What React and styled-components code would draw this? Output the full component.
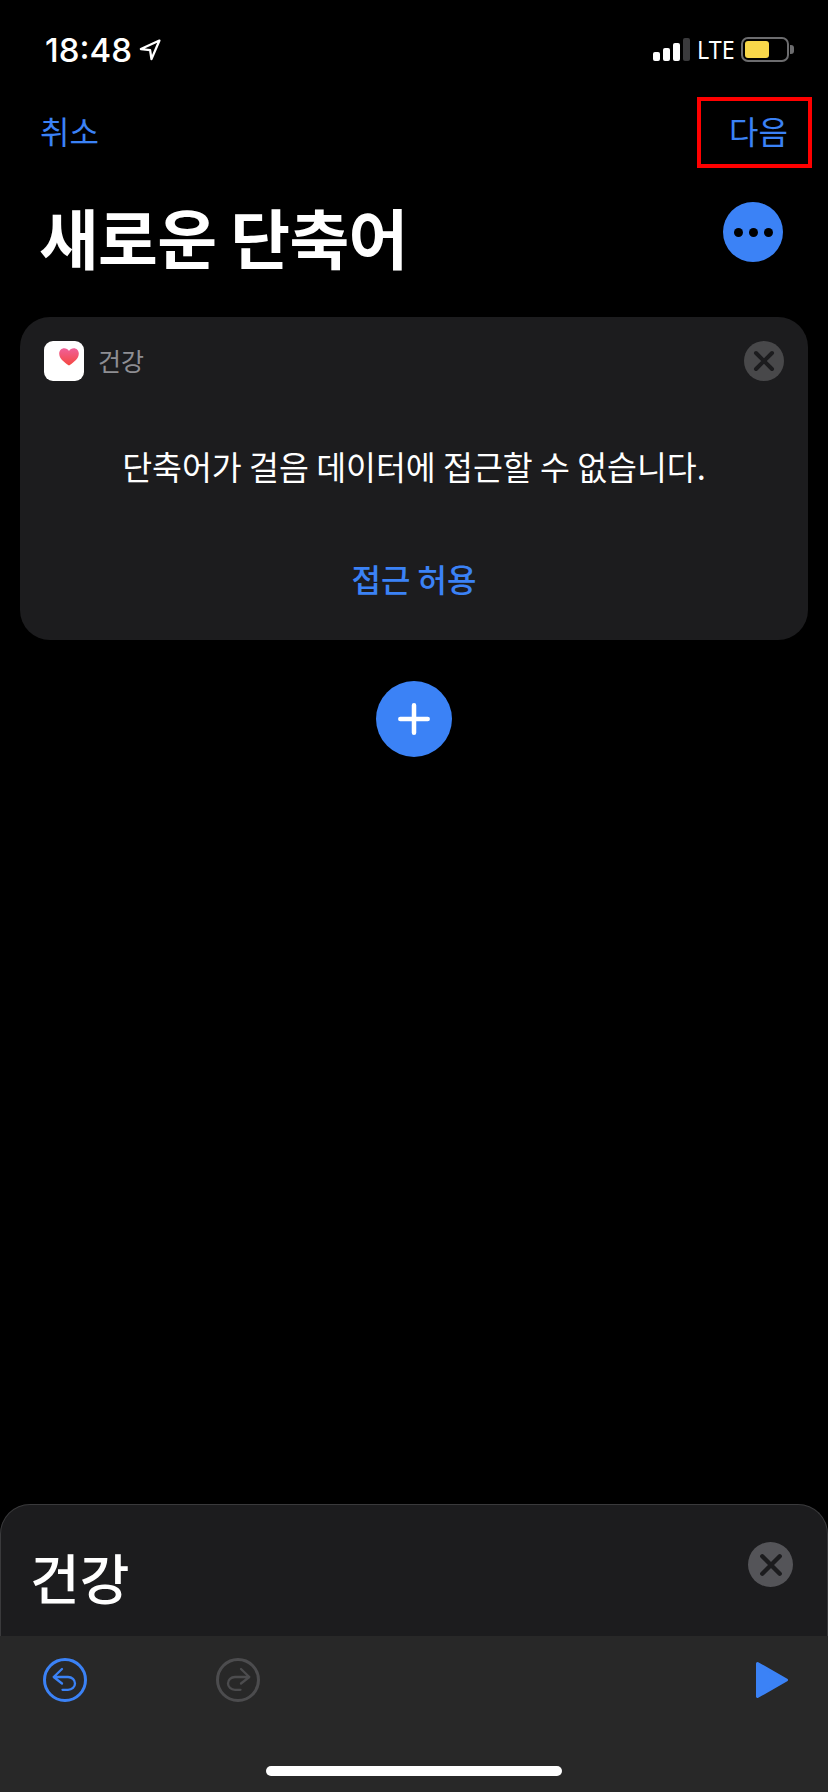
import React from 'react';
import styled, { createGlobalStyle } from 'styled-components';

const BLUE = '#3b82f6';
const FONT = '"Noto Sans CJK KR", "Noto Sans", sans-serif';

const App = () => {
  return (
    <>
      <GlobalStyle />
      <Screen>
        <StatusBar>
          <TimeGroup>
            <Time>18:48</Time>
            <LocationArrow />
          </TimeGroup>
          <StatusRight>
            <SignalBars>
              <Bar $h={9} />
              <Bar $h={13} />
              <Bar $h={18} />
              <Bar $h={23} $off />
            </SignalBars>
            <Lte>LTE</Lte>
            <Battery>
              <BatteryFill />
            </Battery>
            <BatteryCap />
          </StatusRight>
        </StatusBar>

        <NavRow>
          <NavLink>취소</NavLink>
          <NavLink>다음</NavLink>
          <Highlight />
        </NavRow>

        <TitleRow>
          <Title>새로운 단축어</Title>
          <MoreButton>
            <Dot />
            <Dot />
            <Dot />
          </MoreButton>
        </TitleRow>

        <Card>
          <CardHeader>
            <AppIcon>
              <HeartIcon />
            </AppIcon>
            <AppName>건강</AppName>
            <CloseButton $size={40} $bg="#48484a">
              <CrossIcon size={22} />
            </CloseButton>
          </CardHeader>
          <Message>단축어가 걸음 데이터에 접근할 수 없습니다.</Message>
          <AllowLink>접근 허용</AllowLink>
        </Card>

        <AddButton>
          <PlusIcon />
        </AddButton>

        <Sheet>
          <SheetTitle>건강</SheetTitle>
          <CloseButton $size={45} $bg="#545458">
            <CrossIcon size={24} />
          </CloseButton>
        </Sheet>

        <Toolbar>
          <ToolbarIcons>
            <UndoIcon color={BLUE} />
            <RedoIcon color="#4c4c4e" />
            <PlayIcon />
          </ToolbarIcons>
          <HomeBar />
        </Toolbar>
      </Screen>
    </>
  );
};

const LocationArrow = () => (
  <svg width="22" height="22" viewBox="0 0 21 21" fill="none">
    <path
      d="M19.5 1.5 L1.8 9.6 L10.6 10.6 L11.9 19.2 Z"
      stroke="#fff"
      strokeWidth="2.2"
      strokeLinejoin="round"
    />
  </svg>
);

const HeartIcon = () => (
  <HeartSvg width="20" height="18" viewBox="0 0 20 18">
    <defs>
      <linearGradient id="heart" x1="0" y1="0" x2="0" y2="1">
        <stop offset="0" stopColor="#f0609a" />
        <stop offset="1" stopColor="#f5473f" />
      </linearGradient>
    </defs>
    <path
      d="M10 17.6 C4.5 13.6 0.2 10.4 0.2 5.5 C0.2 2.4 2.5 0.2 5.2 0.2 C7.2 0.2 9 1.2 10 3 C11 1.2 12.8 0.2 14.8 0.2 C17.5 0.2 19.8 2.4 19.8 5.5 C19.8 10.4 15.5 13.6 10 17.6 Z"
      fill="url(#heart)"
    />
  </HeartSvg>
);

const CrossIcon = ({ size }) => (
  <svg width={size} height={size} viewBox="0 0 22 22" fill="none">
    <path
      d="M3 3 L19 19 M19 3 L3 19"
      stroke="#1c1c1e"
      strokeWidth="4"
      strokeLinecap="round"
    />
  </svg>
);

const PlusIcon = () => (
  <svg width="34" height="34" viewBox="0 0 34 34" fill="none">
    <path
      d="M17 3.3 V30.7 M3.3 17 H30.7"
      stroke="#fff"
      strokeWidth="4.5"
      strokeLinecap="round"
    />
  </svg>
);

const UndoIcon = ({ color }) => (
  <svg width="44" height="44" viewBox="0 0 44 44" fill="none">
    <circle cx="22" cy="22" r="20.5" stroke={color} strokeWidth="3" />
    <path
      d="M19 11 L10.7 19 L19 25.5 M10.7 19 H25 C29 19 32 22 32 25.5 C32 29 29 31.8 25 31.8 H19.5"
      stroke={color}
      strokeWidth="2.3"
      strokeLinecap="round"
      strokeLinejoin="round"
    />
  </svg>
);

const RedoIcon = ({ color }) => (
  <svg width="44" height="44" viewBox="0 0 44 44" fill="none">
    <circle cx="22" cy="22" r="20.5" stroke={color} strokeWidth="3" />
    <path
      d="M25 11 L33.3 19 L25 25.5 M33.3 19 H19 C15 19 12 22 12 25.5 C12 29 15 31.8 19 31.8 H24.5"
      stroke={color}
      strokeWidth="2.3"
      strokeLinecap="round"
      strokeLinejoin="round"
    />
  </svg>
);

const PlayIcon = () => (
  <PlaySvg width="34" height="38" viewBox="0 0 34 38">
    <path
      d="M2.5 2.5 L31.5 19 L2.5 35.5 Z"
      fill={BLUE}
      stroke={BLUE}
      strokeWidth="3"
      strokeLinejoin="round"
    />
  </PlaySvg>
);

const GlobalStyle = createGlobalStyle`
  html, body {
    margin: 0;
    padding: 0;
    background: #000;
  }
`;

const Screen = styled.div`
  position: relative;
  width: 828px;
  height: 1792px;
  display: flex;
  flex-direction: column;
  overflow: hidden;
  background: #000;
  color: #fff;
  font-family: ${FONT};
`;

const StatusBar = styled.div`
  height: 97px;
  box-sizing: border-box;
  padding: 31px 34px 0 45px;
  display: flex;
  justify-content: space-between;
  align-items: flex-start;
`;

const TimeGroup = styled.div`
  display: flex;
  align-items: center;
  gap: 7px;
`;

const Time = styled.span`
  font-family: Inter, sans-serif;
  font-size: 33px;
  line-height: 38px;
  font-weight: 500;
`;

const StatusRight = styled.div`
  display: flex;
  align-items: center;
  height: 28px;
  margin-top: 4px;
`;

const SignalBars = styled.div`
  display: flex;
  align-items: flex-end;
  gap: 3px;
  height: 24px;
`;

const Bar = styled.span`
  width: 7px;
  height: ${(p) => p.$h}px;
  border-radius: 2px;
  background: ${(p) => (p.$off ? '#3a3a3c' : '#fff')};
`;

const Lte = styled.span`
  margin-left: 7px;
  width: 36px;
  font-family: "Noto Sans", sans-serif;
  font-size: 25px;
  line-height: 28px;
  transform: scaleX(0.93);
  transform-origin: left center;
`;

const Battery = styled.div`
  margin-left: 8px;
  width: 48px;
  height: 25px;
  box-sizing: border-box;
  border: 2px solid #6c6c6e;
  border-radius: 7px;
  padding: 2px;
`;

const BatteryFill = styled.div`
  width: 24px;
  height: 100%;
  border-radius: 3px;
  background: #f8d74a;
`;

const BatteryCap = styled.span`
  margin-left: 1px;
  width: 4px;
  height: 9px;
  border-radius: 0 3px 3px 0;
  background: #6c6c6e;
`;

const NavRow = styled.div`
  position: relative;
  height: 71px;
  box-sizing: border-box;
  padding: 0 40px 6px;
  display: flex;
  justify-content: space-between;
  align-items: center;
`;

const NavLink = styled.span`
  font-size: 32px;
  line-height: 40px;
  color: ${BLUE};
`;

const Highlight = styled.div`
  position: absolute;
  top: 0;
  right: 16px;
  width: 115px;
  height: 71px;
  box-sizing: border-box;
  border: 4px solid #f00;
`;

const TitleRow = styled.div`
  height: 149px;
  box-sizing: border-box;
  padding: 34px 45px 0 39px;
  display: flex;
  justify-content: space-between;
  align-items: flex-start;
`;

const Title = styled.h1`
  margin: -5px 0 0;
  font-size: 65px;
  line-height: 78px;
  font-weight: 700;
  letter-spacing: -0.7px;
  white-space: nowrap;
`;

const MoreButton = styled.div`
  width: 60px;
  height: 60px;
  border-radius: 50%;
  background: ${BLUE};
  display: flex;
  align-items: center;
  justify-content: center;
  gap: 6px;
`;

const Dot = styled.span`
  width: 9px;
  height: 9px;
  border-radius: 50%;
  background: #000;
`;

const Card = styled.section`
  margin: 0 20px;
  height: 323px;
  box-sizing: border-box;
  padding: 24px 24px 0;
  border-radius: 30px;
  background: #1c1c1e;
  display: flex;
  flex-direction: column;
`;

const CardHeader = styled.div`
  display: flex;
  align-items: center;
  height: 40px;
`;

const AppIcon = styled.div`
  position: relative;
  width: 40px;
  height: 40px;
  border-radius: 9px;
  background: #fff;
`;

const HeartSvg = styled.svg`
  position: absolute;
  top: 7px;
  right: 5px;
`;

const AppName = styled.span`
  margin: 0 0 2px 14px;
  flex: 1;
  font-size: 25px;
  line-height: 34px;
  color: #8e8e93;
`;

const CloseButton = styled.div`
  width: ${(p) => p.$size}px;
  height: ${(p) => p.$size}px;
  flex-shrink: 0;
  border-radius: 50%;
  background: ${(p) => p.$bg};
  display: flex;
  align-items: center;
  justify-content: center;
`;

const Message = styled.p`
  margin: 60px 0 0;
  text-align: center;
  font-size: 32.5px;
  line-height: 50px;
  color: #fff;
  white-space: nowrap;
`;

const AllowLink = styled.div`
  margin-top: 65px;
  text-align: center;
  font-size: 32px;
  line-height: 44px;
  font-weight: 500;
  color: ${BLUE};
`;

const AddButton = styled.div`
  margin: 41px auto 0;
  width: 76px;
  height: 76px;
  border-radius: 50%;
  background: ${BLUE};
  display: flex;
  align-items: center;
  justify-content: center;
`;

const Sheet = styled.section`
  margin-top: auto;
  height: 132px;
  box-sizing: border-box;
  padding: 37px 34px 0 29px;
  display: flex;
  justify-content: space-between;
  align-items: flex-start;
  background: #1c1c1e;
  border: 1px solid #3a3a3c;
  border-bottom: none;
  border-radius: 30px 30px 0 0;
`;

const SheetTitle = styled.h2`
  margin: 2px 0 0;
  font-size: 54px;
  line-height: 66px;
  font-weight: 500;
`;

const Toolbar = styled.div`
  height: 156px;
  box-sizing: border-box;
  padding: 22px 0 0;
  background: #282828;
  display: flex;
  flex-direction: column;
  align-items: center;
`;

const ToolbarIcons = styled.div`
  align-self: stretch;
  height: 44px;
  padding: 0 39px 0 43px;
  display: flex;
  align-items: center;
  gap: 129px;
`;

const PlaySvg = styled.svg`
  margin-left: auto;
`;

const HomeBar = styled.div`
  margin-top: 64px;
  width: 296px;
  height: 10px;
  border-radius: 5px;
  background: #fff;
`;

export default App;
